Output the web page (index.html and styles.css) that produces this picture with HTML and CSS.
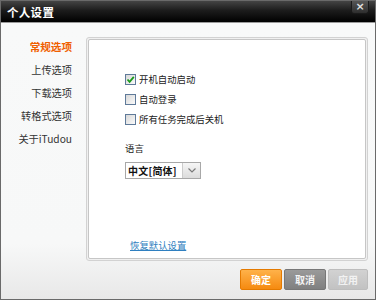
FILE: index.html
```html
<!DOCTYPE html>
<html>
<head>
<meta charset="utf-8">
<link rel="stylesheet" href="styles.css">
</head>
<body>
<div class="window">
  <div class="titlebar">
    <span class="title">个人设置</span>
    <span class="close">×</span>
  </div>
  <div class="body">
    <div class="main">
      <ul class="nav">
        <li class="active">常规选项</li>
        <li>上传选项</li>
        <li>下载选项</li>
        <li>转格式选项</li>
        <li>关于iTudou</li>
      </ul>
      <div class="panel">
        <div class="panel-inner">
          <label class="row"><span class="check checked"><svg width="9" height="9" viewBox="0 0 9 9"><path d="M1.5 4.5 L3.6 6.8 L7.8 1.8" fill="none" stroke="#1a9a1a" stroke-width="1.8"/></svg></span>开机自动启动</label>
          <label class="row"><span class="check"></span>自动登录</label>
          <label class="row"><span class="check"></span>所有任务完成后关机</label>
          <div class="lang-label">语言</div>
          <div class="select"><span class="select-text">中文[简体]</span><span class="select-btn"><svg width="8" height="5" viewBox="0 0 8 5"><path d="M0.5 0.5 L4 4 L7.5 0.5" fill="none" stroke="#7a7a7a" stroke-width="1.2"/></svg></span></div>
          <a class="reset" href="#">恢复默认设置</a>
        </div>
      </div>
    </div>
    <div class="footer">
      <button class="btn btn-ok">确定</button>
      <button class="btn btn-cancel">取消</button>
      <button class="btn btn-apply">应用</button>
    </div>
  </div>
</div>
</body>
</html>
```
FILE: styles.css
```css
* { box-sizing: border-box; }
html, body { margin: 0; padding: 0; }
body { width: 376px; height: 300px; background: #fff; font-family: "Noto Sans CJK SC", "Noto Sans", sans-serif; }
.window {
  width: 376px; height: 300px;
  border: 1px solid #6a6a6a;
  display: flex; flex-direction: column;
  overflow: hidden;
}
.titlebar {
  height: 22px; flex: none;
  background: linear-gradient(#444 0%, #1c1c1c 45%, #000 100%);
  display: flex; align-items: center; justify-content: space-between;
  padding: 0 6px 0 6px;
  border-bottom: 1px solid #9a9a9a;
}
.title { color: #fff; font-weight: bold; font-size: 11.5px; letter-spacing: 0.3px; }
.close {
  width: 18px; height: 13px; margin-top: -8px;
  background: linear-gradient(#555, #2e2e2e);
  border: 1px solid #1a1a1a; border-top: none;
  border-radius: 0 0 3px 3px;
  color: #e0e0e0; font-size: 11px; font-weight: bold; line-height: 12px;
  display: flex; justify-content: center; font-family: "DejaVu Sans", sans-serif;
}
.body {
  flex: 1; display: flex; flex-direction: column;
  background: linear-gradient(#f8f9f9 0%, #f7f8f8 80%, #e8e8e8 100%);
}
.main { display: flex; height: 239px; }
.nav {
  list-style: none; margin: 0; padding: 17px 14px 0 0;
  width: 85px; text-align: right;
  font-size: 10.2px; color: #333;
}
.nav li { height: 23px; line-height: 14px; white-space: nowrap; }
.nav li.active { color: #f06000; font-weight: bold; font-size: 10.6px; }
.panel {
  margin-top: 14px; width: 282px; height: 224px;
  border: 1px solid #d2d2d2; border-radius: 3px;
  padding: 1px; background: #f0f0f0;
}
.panel-inner {
  height: 100%; background: #fff; border: 1px solid #c6c6c6; border-radius: 2px;
  padding: 29px 0 6px 36px;
  display: flex; flex-direction: column; align-items: flex-start;
  font-size: 9.4px; color: #222;
}
.row { display: flex; align-items: center; height: 20px; }
.check {
  width: 11px; height: 11px; margin-right: 3px;
  border: 1px solid #5f7a99;
  background: linear-gradient(135deg, #d8d8d8, #fafafa);
  display: flex; align-items: center; justify-content: center;
}
.lang-label { margin-top: 12px; line-height: 14px; }
.select {
  margin-top: 7px; width: 76px; height: 17px;
  border: 1px solid #a8a8a8; display: flex; background: #fff;
}
.select-text { flex: 1; font-weight: bold; font-size: 10px; line-height: 15px; padding-left: 2px; color: #111; letter-spacing: 0.2px; }
.select-btn {
  width: 18px; border-left: 1px solid #ccc;
  background: linear-gradient(#f6f6f6, #dcdcdc);
  display: flex; align-items: center; justify-content: center;
}
.reset {
  margin-top: auto; margin-left: 5px; line-height: 14px;
  color: #2f7fc0; text-decoration: underline; font-size: 9.4px;
}
.footer {
  flex: 1; display: flex; justify-content: flex-end; align-items: flex-start;
  padding: 7px 7px 0 0; gap: 2px;
}
.btn {
  width: 42px; height: 21px; padding: 0; margin: 0;
  font-family: "Noto Sans CJK SC", sans-serif; font-size: 10px; font-weight: bold;
  color: #fff; border-radius: 2px; border: 1px solid;
}
.btn-ok { background: linear-gradient(#ffb24a, #f58a10); border-color: #e47a00; }
.btn-cancel { background: linear-gradient(#9a9a9a, #808080); border-color: #777; color: #f4f4f4; }
.btn-apply { background: linear-gradient(#d2d2d2, #c2c2c2); border-color: #bdbdbd; color: #f2f2f2; width: 40px; }
```
